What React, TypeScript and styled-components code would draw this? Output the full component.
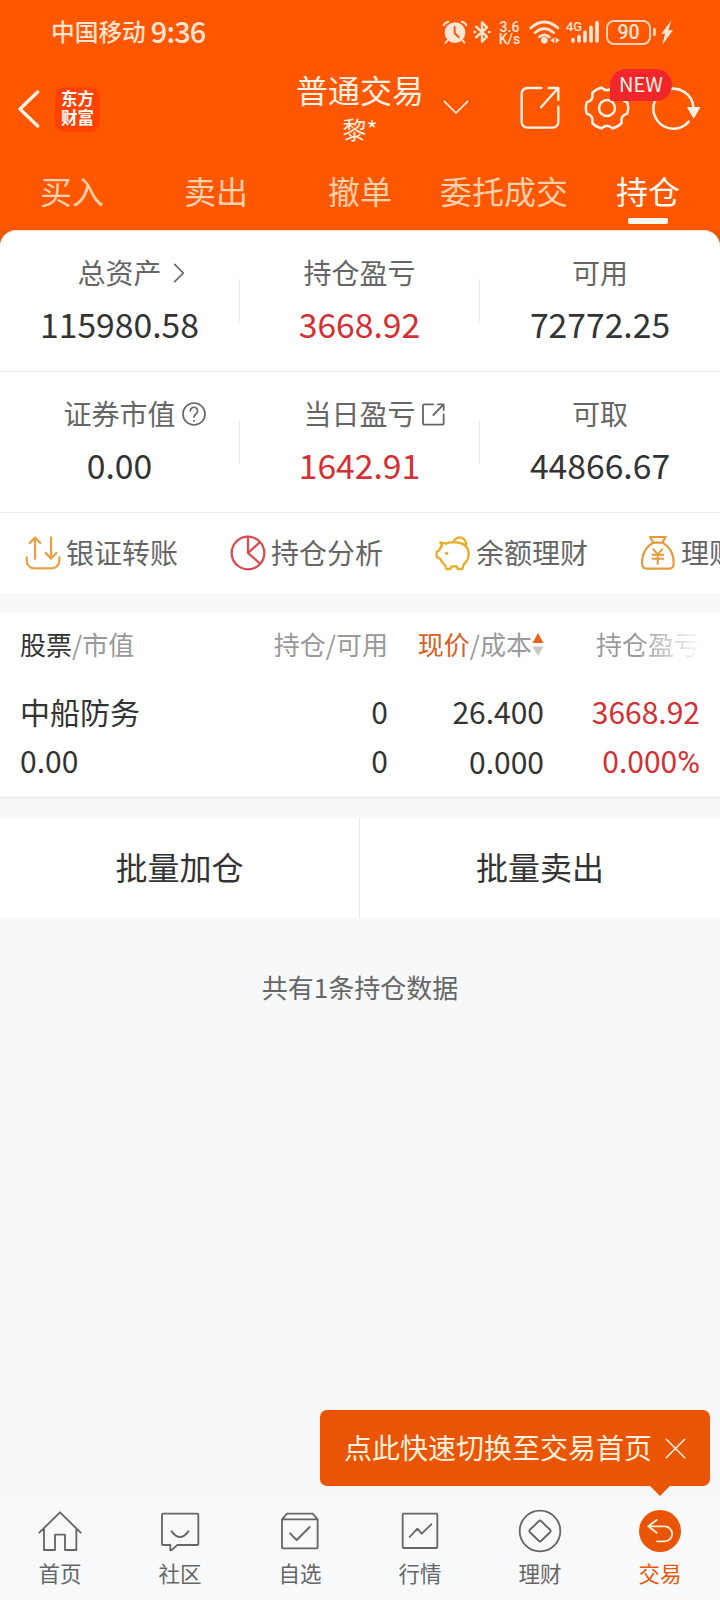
import React from "react";
import styled, { createGlobalStyle } from "styled-components";

const GlobalStyle = createGlobalStyle`
  * { box-sizing: border-box; }
  html, body { margin: 0; padding: 0; background: #f7f8fa; }
  body {
    font-family: "Noto Sans CJK SC", "Noto Sans", sans-serif;
    color: #333;
    width: 720px;
    overflow-x: hidden;
  }
  svg { display: block; flex: none; }
`;

const Screen = styled.div`
  width: 720px;
  height: 1600px;
  display: flex;
  flex-direction: column;
  background: #f7f8fa;
  overflow: hidden;
`;

/* ---------- header ---------- */

const Header = styled.header`
  height: 230px;
  background: #ff5600;
  color: #fff3e8;
  flex: none;
`;

const StatusBar = styled.div`
  height: 64px;
  display: flex;
  align-items: center;
  padding-left: 51px;
  color: #ffe6d4;
`;

const Carrier = styled.span`
  font-size: 23.7px;
  line-height: 60px;
  font-weight: 500;
  padding-bottom: 3px;
`;

const Clock = styled.span`
  font-size: 29px;
  line-height: 60px;
  font-weight: 500;
  letter-spacing: -0.9px;
  margin-left: 5px;
  width: 60px;
  padding-bottom: 4px;
`;

const StatusIcons = styled.div`
  display: flex;
  align-items: center;
  margin-left: auto;
  padding-right: 47px;
`;

const StatusItem = styled.div<{ $gap?: number }>`
  margin-left: ${(p) => p.$gap ?? 0}px;
`;

const NetSpeed = styled.div`
  width: 23px;
  font-family: Roboto, sans-serif;
  font-size: 14px;
  font-weight: 500;
  line-height: 12px;
  text-align: center;
  white-space: nowrap;
  padding-top: 1px;
`;

const Battery = styled.div`
  width: 45px;
  height: 25px;
  border: 2px solid #ffd3b6;
  border-radius: 8px;
  font-family: Roboto, sans-serif;
  font-size: 19.5px;
  font-weight: 500;
  line-height: 22px;
  text-align: center;
`;

const BatteryNub = styled.div`
  width: 3px;
  height: 8px;
  margin-left: 2px;
  border-radius: 0 2px 2px 0;
  background: #ffd3b6;
`;

const TitleBar = styled.div`
  height: 86px;
  display: grid;
  grid-template-columns: 1fr 128px 1fr;
`;

const TitleLeft = styled.div`
  display: flex;
  align-items: center;
  padding-left: 17px;
`;

const Logo = styled.div`
  width: 45px;
  height: 45px;
  margin-left: 15px;
  padding-top: 2px;
  margin-top: 4px;
  border-radius: 10px;
  background: #ff4200;
  color: #fff;
  font-size: 16.5px;
  font-weight: 700;
  line-height: 19px;
  text-align: center;
`;

const TitleCenter = styled.div`
  display: flex;
  flex-direction: column;
  align-items: center;
`;

const Title = styled.div`
  font-size: 32px;
  line-height: 50px;
  white-space: nowrap;
`;

const Account = styled.div`
  font-size: 24px;
  line-height: 30px;
`;

const TitleRight = styled.div`
  display: flex;
  align-items: center;
`;

const TitleAction = styled.div<{ $gap: number; $shift?: number }>`
  position: relative;
  margin-left: ${(p) => p.$gap}px;
  margin-top: ${(p) => p.$shift ?? 2}px;
`;

const NewBadge = styled.span`
  position: absolute;
  left: 26px;
  top: -16px;
  z-index: 1;
  width: 62px;
  height: 32px;
  border-radius: 16px 16px 16px 2px;
  background: #f0262b;
  font-size: 20px;
  line-height: 30px;
  text-align: center;
`;

const Tabs = styled.nav`
  display: grid;
  grid-template-columns: repeat(5, 144px);
  height: 80px;
`;

const Tab = styled.div<{ $active?: boolean }>`
  display: flex;
  flex-direction: column;
  align-items: center;
  font-size: 32px;
  line-height: 68px;
  color: ${(p) => (p.$active ? "#fffaf2" : "#ffd0ac")};
  height: 80px;
  padding-top: 6px;
`;

const TabBar = styled.span`
  width: 40px;
  height: 6px;
  margin-top: -6px;
  border-radius: 2px;
  background: #fffaf2;
`;

/* ---------- asset summary ---------- */

const CardBackdrop = styled.div`
  background: linear-gradient(#ea5504 0 20px, #fff 20px);
  flex: none;
`;

const Card = styled.section`
  background: #fff;
  border-top: 1px solid #ffe0cc;
  border-radius: 16px 16px 0 0;
`;

const MetricRow = styled.div`
  display: grid;
  grid-template-columns: 239px 1px 239px 1px 240px;
  height: 141px;
  border-bottom: 1px solid #ececec;
`;

const Metric = styled.div`
  padding-top: 21px;
  text-align: center;
`;

const MetricLabel = styled.div`
  display: flex;
  justify-content: center;
  align-items: center;
  font-size: 28px;
  line-height: 40px;
  color: #666;
  white-space: nowrap;
`;

const LabelIcon = styled.span<{ $w: number; $gap: number }>`
  width: ${(p) => p.$w}px;
  margin-left: ${(p) => p.$gap}px;
  margin-right: ${(p) => -p.$w - p.$gap}px;
  margin-top: 2px;
`;

const MetricValue = styled.div<{ $up?: boolean }>`
  margin-top: 7px;
  font-size: 33.7px;
  line-height: 50px;
  color: ${(p) => (p.$up ? "#d43033" : "#333")};
`;

const MetricDivider = styled.div`
  height: 44px;
  margin-top: 48px;
  background: #e8e8e8;
`;

const QuickLinks = styled.div`
  display: flex;
  height: 80px;
  background: #fff;
  overflow: hidden;
`;

const QuickLink = styled.div`
  flex: none;
  width: 205px;
  padding-left: 25px;
  display: flex;
  align-items: center;
  font-size: 28px;
  color: #666;
`;

const QuickLabel = styled.span`
  margin-left: 5px;
  padding-bottom: 2px;
  line-height: 40px;
  white-space: nowrap;
`;

/* ---------- holdings ---------- */

const Holdings = styled.section`
  flex: none;
  margin-top: 20px;
  background: #fff;
  border-bottom: 1px solid #e9e9e9;
  height: 185px;
  padding: 0 20px;
`;

const Grid = styled.div<{ $header?: boolean }>`
  display: grid;
  grid-template-columns: 1fr 156px 156px;
  font-size: ${(p) => (p.$header ? 26 : 30)}px;
  line-height: ${(p) => (p.$header ? 62 : 49)}px;
  margin-bottom: ${(p) => (p.$header ? 12 : 0)}px;
  color: ${(p) => (p.$header ? "#999" : "#333")};
`;

const NameAndAmount = styled.div`
  display: flex;
  justify-content: space-between;
  white-space: nowrap;
`;

const Cell = styled.div<{ $up?: boolean }>`
  display: flex;
  justify-content: flex-end;
  align-items: center;
  white-space: nowrap;
  color: ${(p) => (p.$up ? "#d43033" : "inherit")};
`;

const Percent = styled.span`
  font-family: Roboto, sans-serif;
  font-size: 31px;
`;

const FadingCell = styled(Cell)`
  mask-image: linear-gradient(to right, #000 58%, transparent 102%);
`;

const Strong = styled.span<{ $accent?: boolean }>`
  color: ${(p) => (p.$accent ? "#d9601c" : "#333")};
`;

const BatchActions = styled.div`
  flex: none;
  display: grid;
  grid-template-columns: 359px 361px;
  height: 100px;
  margin-top: 20px;
  background: #fff;
`;

const BatchButton = styled.div`
  font-size: 32px;
  line-height: 97px;
  text-align: center;
  & + & { border-left: 1px solid #e8e8e8; }
`;

const Summary = styled.div`
  margin-top: 49px;
  font-size: 26px;
  line-height: 40px;
  text-align: center;
  color: #666;
`;

/* ---------- bottom navigation ---------- */

const BottomNav = styled.nav`
  position: relative;
  flex: none;
  margin-top: auto;
  height: 100px;
  display: grid;
  grid-template-columns: repeat(6, 120px);
  background: #f8f9fb;
`;

const NavItem = styled.div<{ $active?: boolean }>`
  display: flex;
  flex-direction: column;
  align-items: center;
  padding-top: 9px;
  font-size: 21.5px;
  line-height: 40px;
  color: ${(p) => (p.$active ? "#e95504" : "#666")};
`;

const Tip = styled.div`
  position: absolute;
  right: 10px;
  top: -90px;
  width: 390px;
  height: 76px;
  padding-left: 24px;
  display: flex;
  align-items: center;
  border-radius: 7px;
  background: #e95504;
  color: #fff1dc;
  font-size: 28px;
  &::after {
    content: "";
    position: absolute;
    top: 100%;
    left: 330px;
    border: 10px solid transparent;
    border-top-color: #e95504;
    border-bottom: 0;
  }
`;

const TipText = styled.span`
  white-space: nowrap;
  line-height: 40px;
  padding-bottom: 3px;
  margin-right: 13px;
`;

/* ---------- icons ---------- */

interface IconProps {
  w: number;
  h: number;
  box: string;
  sw?: number;
  color?: string;
  children: React.ReactNode;
}

const Icon = ({ w, h, box, sw = 4, color = "currentColor", children }: IconProps) => (
  <svg
    width={w}
    height={h}
    viewBox={box}
    fill="none"
    stroke={color}
    strokeWidth={sw}
    strokeLinecap="round"
    strokeLinejoin="round"
  >
    {children}
  </svg>
);

const gearPath = (() => {
  const at = (deg: number, r: number) => {
    const a = (deg * Math.PI) / 180;
    return `${(69 + r * Math.cos(a)).toFixed(1)} ${(69 + r * Math.sin(a)).toFixed(1)}`;
  };
  let d = `M${at(-15, 63)}`;
  for (let k = 0; k < 6; k++) {
    const t = k * 60;
    d += `Q${at(t, 66)} ${at(t + 15, 63)}Q${at(t + 20, 55)} ${at(t + 30, 53)}Q${at(t + 40, 55)} ${at(t + 45, 63)}`;
  }
  return d + "Z";
})();

const AlarmIcon = () => (
  <Icon w={26} h={24} box="0 0 78 72">
    <circle cx="39" cy="38" r="31" fill="currentColor" stroke="none" />
    <path d="M5 16Q9 7 19 5M73 16Q69 7 59 5M16 62L11 68M62 62L67 68" strokeWidth="6" />
    <path d="M38 21V40L50 51" stroke="#ff5600" strokeWidth="6" />
  </Icon>
);

const BluetoothIcon = () => (
  <Icon w={18} h={24} box="0 0 54 72" sw={7}>
    <path d="M9 20L42 50L27 65V7L42 22L9 52" />
    <path d="M5 36H6M48 36H49" strokeWidth="8" />
  </Icon>
);

const WifiIcon = () => (
  <Icon w={31} h={24} box="0 0 93 72" sw={8}>
    <path d="M5 24Q46 -12 87 24M18 38Q46 14 74 38M31 51Q46 38 61 51" />
    <circle cx="46" cy="61" r="10" fill="currentColor" stroke="none" />
    <path d="M76 52V70L64 61ZM80 52V70L92 61Z" fill="currentColor" stroke="none" />
  </Icon>
);

const SignalIcon = () => (
  <Icon w={34} h={24} box="0 0 102 72" sw={11}>
    <path d="M21 59V63M39 50V63M57 37V63M75 22V63M93 8V63" />
    <text
      x="0"
      y="33"
      fill="currentColor"
      stroke="none"
      fontFamily="Roboto, sans-serif"
      fontWeight="500"
      fontSize="41"
      textLength="48"
      lengthAdjust="spacingAndGlyphs"
    >
      4G
    </text>
  </Icon>
);

const BoltIcon = () => (
  <Icon w={12} h={25} box="0 0 36 75">
    <path d="M31 1L1 41H12L4 74L36 31H22Z" fill="currentColor" stroke="none" />
  </Icon>
);

const ShareIcon = () => (
  <Icon w={40} h={44} box="0 0 120 132" sw={7}>
    <path d="M64 6H22A17 17 0 0 0 5 23V108A17 17 0 0 0 22 125H98A17 17 0 0 0 115 108V62" />
    <path d="M86 6H115V42M63 64L114 7" />
  </Icon>
);

const SmallShareIcon = () => (
  <Icon w={23} h={23} box="0 0 69 69" sw={5.5}>
    <path d="M34 4H8Q3 4 3 9V60Q3 65 8 65H60Q65 65 65 60V34" />
    <path d="M48 4H65V21M34 36L64 5" />
  </Icon>
);

const HelpIcon = () => (
  <Icon w={24} h={24} box="0 0 72 72" sw={5}>
    <circle cx="36" cy="36" r="33" />
    <path d="M25 27A11 11 0 1 1 42 36Q36 40 36 46" />
    <path d="M36 56V56.5" strokeWidth="6" />
  </Icon>
);

const TransferIcon = () => (
  <Icon w={36} h={36} box="0 0 108 108" sw={7} color="#e8a348">
    <path d="M5 67V76A23 23 0 0 0 28 100H80A23 23 0 0 0 103 76V67" />
    <path d="M30 71V8M14 24L30 8L46 24M78 7V70M62 54L78 71L94 54" />
  </Icon>
);

const PieIcon = () => (
  <Icon w={36} h={36} box="0 0 108 108" sw={7} color="#d84c50">
    <circle cx="54" cy="54" r="49" />
    <path d="M54 6V54L89 22M54 54L88 84" />
  </Icon>
);

const PiggyIcon = () => (
  <Icon w={36} h={36} box="0 0 108 108" sw={7} color="#e5ae28">
    <path d="M16 22L33 26Q40 22 50 22H66Q101 26 101 58Q101 76 87 87L82 102H68L65 94H49L46 102H34L30 90Q20 84 17 73L5 65V51L13 46Q15 38 21 33Z" />
    <path d="M56 20A19 19 0 1 1 92 33" />
    <circle cx="35" cy="55" r="5" fill="#e5ae28" stroke="none" />
  </Icon>
);

const MoneyBagIcon = () => (
  <Icon w={36} h={36} box="0 0 108 108" sw={6.5} color="#e59b3a">
    <path d="M30 6H77L67 23H40Z" />
    <path d="M40 23Q6 42 6 84Q6 101 20 101H88Q101 101 101 84Q101 42 67 23" />
    <path d="M40 43L53 58L67 43M37 59H70M37 71H70M53 58V87" strokeWidth="6" />
  </Icon>
);

const NavIcon = ({ children }: { children: React.ReactNode }) => (
  <Icon w={44} h={44} box="0 0 132 132" sw={5.5}>
    {children}
  </Icon>
);

/* ---------- page ---------- */

interface MetricData {
  label: string;
  value: string;
  up?: boolean;
  icon?: React.ReactNode;
  iconWidth?: number;
  iconGap?: number;
}

const metrics: MetricData[][] = [
  [
    {
      label: "总资产",
      value: "115980.58",
      icon: (
        <Icon w={12} h={20} box="0 0 36 60" sw={5}>
          <path d="M5 4L31 30L5 56" />
        </Icon>
      ),
      iconWidth: 12,
      iconGap: 11,
    },
    { label: "持仓盈亏", value: "3668.92", up: true },
    { label: "可用", value: "72772.25" },
  ],
  [
    { label: "证券市值", value: "0.00", icon: <HelpIcon />, iconWidth: 24, iconGap: 6 },
    {
      label: "当日盈亏",
      value: "1642.91",
      up: true,
      icon: <SmallShareIcon />,
      iconWidth: 23,
      iconGap: 6,
    },
    { label: "可取", value: "44866.67" },
  ],
];

const tabs = ["买入", "卖出", "撤单", "委托成交", "持仓"];

const quickLinks = [
  { label: "银证转账", icon: <TransferIcon /> },
  { label: "持仓分析", icon: <PieIcon /> },
  { label: "余额理财", icon: <PiggyIcon /> },
  { label: "理财", icon: <MoneyBagIcon /> },
];

const navItems = [
  {
    label: "首页",
    icon: <path d="M4 71L66 10L128 71M18 60V123H51V77H81V123H115V60" />,
  },
  {
    label: "社区",
    icon: <path d="M15 14H118Q121 14 121 17V105Q121 108 118 108H58L40 124H37V108H15Q12 108 12 105V17Q12 14 15 14ZM41 67Q66 101 91 67" />,
  },
  {
    label: "自选",
    icon: <path d="M12 31H119V113Q119 118 114 118H17Q12 118 12 113V31L27 14H104L119 31M36 73L56 93L95 54" />,
  },
  {
    label: "行情",
    icon: <path d="M17 14H115Q118 14 118 17V114Q118 117 115 117H17Q14 117 14 114V17Q14 14 17 14ZM35 84L58 59L71 74L100 46" />,
  },
  {
    label: "理财",
    icon: (
      <>
        <circle cx="66" cy="66" r="61" />
        <path d="M63 36Q66 33 69 36L97 63Q99 66 97 69L69 96Q66 99 63 96L35 69Q33 66 35 63Z" />
      </>
    ),
  },
  {
    label: "交易",
    icon: (
      <>
        <circle cx="66" cy="66" r="63" fill="currentColor" stroke="none" />
        <path d="M56 33L31 52L56 71M31 52H80A22.5 22.5 0 0 1 80 97H57" stroke="#fff1dc" />
      </>
    ),
  },
];

export default function App() {
  return (
    <>
      <GlobalStyle />
      <Screen>
        <Header>
          <StatusBar>
            <Carrier>中国移动</Carrier>
            <Clock>9:36</Clock>
            <StatusIcons>
              <StatusItem><AlarmIcon /></StatusItem>
              <StatusItem $gap={5}><BluetoothIcon /></StatusItem>
              <StatusItem $gap={7}>
                <NetSpeed>
                  <div>3.6</div>
                  <div>K/s</div>
                </NetSpeed>
              </StatusItem>
              <StatusItem $gap={8}><WifiIcon /></StatusItem>
              <StatusItem $gap={6}><SignalIcon /></StatusItem>
              <StatusItem $gap={6}><Battery>90</Battery></StatusItem>
              <BatteryNub />
              <StatusItem $gap={5}><BoltIcon /></StatusItem>
            </StatusIcons>
          </StatusBar>
          <TitleBar>
            <TitleLeft>
              <TitleAction $gap={0} $shift={4}>
                <Icon w={23} h={38} box="0 0 69 114" sw={10}>
                  <path d="M62 6L9 57L62 108" />
                </Icon>
              </TitleAction>
              <Logo>
                <div>东方</div>
                <div>财富</div>
              </Logo>
            </TitleLeft>
            <TitleCenter>
              <Title>普通交易</Title>
              <Account>黎*</Account>
            </TitleCenter>
            <TitleRight>
              <TitleAction $gap={19} $shift={0}>
                <Icon w={26} h={15} box="0 0 78 45" sw={5}>
                  <path d="M4 4L39 39L74 4" />
                </Icon>
              </TitleAction>
              <TitleAction $gap={51}><ShareIcon /></TitleAction>
              <TitleAction $gap={24}>
                <Icon w={46} h={46} box="0 0 138 138" sw={7.5}>
                  <path d={gearPath} />
                  <circle cx="69" cy="69" r="24" />
                </Icon>
                <NewBadge>NEW</NewBadge>
              </TitleAction>
              <TitleAction $gap={20}>
                <Icon w={50} h={46} box="0 0 150 138" sw={7.5}>
                  <path d="M130 66A60 60 0 1 0 116 110" />
                  <path d="M114 68H148L131 98Z" fill="currentColor" strokeWidth="4" />
                </Icon>
              </TitleAction>
            </TitleRight>
          </TitleBar>
          <Tabs>
            {tabs.map((t) => (
              <Tab key={t} $active={t === "持仓"}>
                {t}
                {t === "持仓" && <TabBar />}
              </Tab>
            ))}
          </Tabs>
        </Header>

        <CardBackdrop>
          <Card>
            {metrics.map((row, r) => (
              <MetricRow key={r}>
                {row.map((m, i) => (
                  <React.Fragment key={m.label}>
                    {i > 0 && <MetricDivider />}
                    <Metric>
                      <MetricLabel>
                        {m.label}
                        {m.icon && (
                          <LabelIcon $w={m.iconWidth ?? 0} $gap={m.iconGap ?? 0}>
                            {m.icon}
                          </LabelIcon>
                        )}
                      </MetricLabel>
                      <MetricValue $up={m.up}>{m.value}</MetricValue>
                    </Metric>
                  </React.Fragment>
                ))}
              </MetricRow>
            ))}
            <QuickLinks>
              {quickLinks.map((q) => (
                <QuickLink key={q.label}>
                  {q.icon}
                  <QuickLabel>{q.label}</QuickLabel>
                </QuickLink>
              ))}
            </QuickLinks>
          </Card>
        </CardBackdrop>

        <Holdings>
          <Grid $header>
            <NameAndAmount>
              <span><Strong>股票</Strong>/市值</span>
              <span>持仓/可用</span>
            </NameAndAmount>
            <Cell>
              <span><Strong $accent>现价</Strong>/成本</span>
              <svg width="12" height="24" viewBox="0 0 12 24">
                <path d="M6 1L11.5 11H0.5Z" fill="#ea6420" />
                <path d="M6 24L11.5 14.5H0.5Z" fill="#c8c8c8" />
              </svg>
            </Cell>
            <FadingCell>持仓盈亏</FadingCell>
          </Grid>
          <Grid>
            <NameAndAmount><span>中船防务</span><span>0</span></NameAndAmount>
            <Cell>26.400</Cell>
            <Cell $up>3668.92</Cell>
          </Grid>
          <Grid>
            <NameAndAmount><span>0.00</span><span>0</span></NameAndAmount>
            <Cell>0.000</Cell>
            <Cell $up><span>0.000<Percent>%</Percent></span></Cell>
          </Grid>
        </Holdings>

        <BatchActions>
          <BatchButton>批量加仓</BatchButton>
          <BatchButton>批量卖出</BatchButton>
        </BatchActions>

        <Summary>共有1条持仓数据</Summary>

        <BottomNav>
          {navItems.map((n) => (
            <NavItem key={n.label} $active={n.label === "交易"}>
              <NavIcon>{n.icon}</NavIcon>
              {n.label}
            </NavItem>
          ))}
          <Tip>
            <TipText>点此快速切换至交易首页</TipText>
            <Icon w={21} h={21} box="0 0 66 66" sw={5}>
              <path d="M4 4L62 62M62 4L4 62" />
            </Icon>
          </Tip>
        </BottomNav>
      </Screen>
    </>
  );
}
